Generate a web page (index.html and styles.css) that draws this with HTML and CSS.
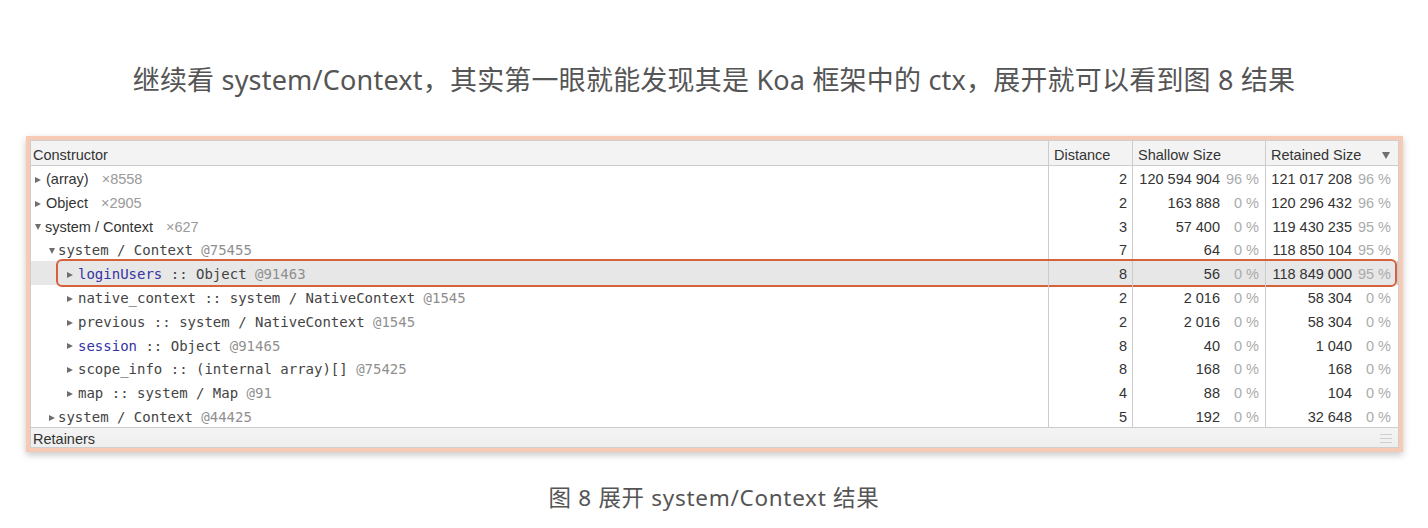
FILE: index.html
```html
<!DOCTYPE html>
<html lang="zh-CN">
<head>
<meta charset="utf-8">
<title>system/Context</title>
<link rel="stylesheet" href="styles.css">
</head>
<body>
<div class="page">
  <p class="title">继续看 system/Context，其实第一眼就能发现其是 Koa 框架中的 ctx，展开就可以看到图 8 结果</p>

  <div class="frame">
    <div class="inner">
      <div class="grid head">
        <div class="c name">Constructor</div>
        <div class="c dist-h">Distance</div>
        <div class="c size-h">Shallow Size</div>
        <div class="c size-h sorted">Retained Size<span class="sort"></span></div>
      </div>

      <div class="rows">
        <div class="grid row l0">
          <div class="c name"><span class="tri closed"></span><span>(array)</span><span class="count">×8558</span></div>
          <div class="c dist">2</div>
          <div class="c size"><span class="num">120 594 904</span><span class="pct">96 %</span></div>
          <div class="c size"><span class="num">121 017 208</span><span class="pct">96 %</span></div>
        </div>
        <div class="grid row l0">
          <div class="c name"><span class="tri closed"></span><span>Object</span><span class="count">×2905</span></div>
          <div class="c dist">2</div>
          <div class="c size"><span class="num">163 888</span><span class="pct">0 %</span></div>
          <div class="c size"><span class="num">120 296 432</span><span class="pct">96 %</span></div>
        </div>
        <div class="grid row l0">
          <div class="c name"><span class="tri open"></span><span>system / Context</span><span class="count">×627</span></div>
          <div class="c dist">3</div>
          <div class="c size"><span class="num">57 400</span><span class="pct">0 %</span></div>
          <div class="c size"><span class="num">119 430 235</span><span class="pct">95 %</span></div>
        </div>
        <div class="grid row l1 mono">
          <div class="c name"><span class="tri open"></span><span>system / Context <span class="id">@75455</span></span></div>
          <div class="c dist">7</div>
          <div class="c size"><span class="num">64</span><span class="pct">0 %</span></div>
          <div class="c size"><span class="num">118 850 104</span><span class="pct">95 %</span></div>
        </div>
        <div class="grid row l2 mono selected">
          <div class="c name"><span class="tri closed"></span><span><span class="prop">loginUsers</span> :: Object <span class="id">@91463</span></span></div>
          <div class="c dist">8</div>
          <div class="c size"><span class="num">56</span><span class="pct">0 %</span></div>
          <div class="c size"><span class="num">118 849 000</span><span class="pct">95 %</span></div>
          <div class="mark"></div>
        </div>
        <div class="grid row l2 mono">
          <div class="c name"><span class="tri closed"></span><span>native_context :: system / NativeContext <span class="id">@1545</span></span></div>
          <div class="c dist">2</div>
          <div class="c size"><span class="num">2 016</span><span class="pct">0 %</span></div>
          <div class="c size"><span class="num">58 304</span><span class="pct">0 %</span></div>
        </div>
        <div class="grid row l2 mono">
          <div class="c name"><span class="tri closed"></span><span>previous :: system / NativeContext <span class="id">@1545</span></span></div>
          <div class="c dist">2</div>
          <div class="c size"><span class="num">2 016</span><span class="pct">0 %</span></div>
          <div class="c size"><span class="num">58 304</span><span class="pct">0 %</span></div>
        </div>
        <div class="grid row l2 mono">
          <div class="c name"><span class="tri closed"></span><span><span class="prop">session</span> :: Object <span class="id">@91465</span></span></div>
          <div class="c dist">8</div>
          <div class="c size"><span class="num">40</span><span class="pct">0 %</span></div>
          <div class="c size"><span class="num">1 040</span><span class="pct">0 %</span></div>
        </div>
        <div class="grid row l2 mono">
          <div class="c name"><span class="tri closed"></span><span>scope_info :: (internal array)[] <span class="id">@75425</span></span></div>
          <div class="c dist">8</div>
          <div class="c size"><span class="num">168</span><span class="pct">0 %</span></div>
          <div class="c size"><span class="num">168</span><span class="pct">0 %</span></div>
        </div>
        <div class="grid row l2 mono">
          <div class="c name"><span class="tri closed"></span><span>map :: system / Map <span class="id">@91</span></span></div>
          <div class="c dist">4</div>
          <div class="c size"><span class="num">88</span><span class="pct">0 %</span></div>
          <div class="c size"><span class="num">104</span><span class="pct">0 %</span></div>
        </div>
        <div class="grid row l1 mono">
          <div class="c name"><span class="tri closed"></span><span>system / Context <span class="id">@44425</span></span></div>
          <div class="c dist">5</div>
          <div class="c size"><span class="num">192</span><span class="pct">0 %</span></div>
          <div class="c size"><span class="num">32 648</span><span class="pct">0 %</span></div>
        </div>
      </div>

      <div class="retainers">
        <span>Retainers</span>
        <svg class="grip" width="12" height="9" viewBox="0 0 12 9"><path d="M0 0.5H12M0 4.5H12M0 8.5H12" stroke="#cfcfcf" stroke-width="1"/></svg>
      </div>
    </div>
  </div>

  <p class="caption">图 8 展开 system/Context 结果</p>
</div>
</body>
</html>
```

FILE: styles.css
```css
* { box-sizing: border-box; }

html, body {
  margin: 0;
  padding: 0;
  background: #ffffff;
}

.page {
  width: 1428px;
  height: 528px;
  padding-top: 62px;
  overflow: hidden;
}

.title {
  margin: 0;
  height: 36px;
  line-height: 36px;
  text-align: center;
  font-family: "Noto Sans", "Noto Sans CJK SC", sans-serif;
  font-size: 27px;
  letter-spacing: 0.2px;
  color: #555555;
}

.caption {
  margin: 31px 0 0;
  height: 30px;
  line-height: 30px;
  text-align: center;
  font-family: "Noto Sans", "Noto Sans CJK SC", sans-serif;
  font-size: 22.5px;
  letter-spacing: 0.7px;
  color: #555555;
}

.frame {
  margin: 38px 25px 0 26px;
  border: 4px solid #f6cab5;
  box-shadow: 0 3px 7px rgba(0, 0, 0, 0.22);
  background: #ffffff;
}

.inner {
  border: 1px solid #cfcfcf;
  font-family: "Liberation Sans", Arial, sans-serif;
  font-size: 14.5px;
  color: #333333;
}

.grid {
  display: grid;
  grid-template-columns: 1018px 84px 133px 1fr;
}

.c {
  border-right: 1px solid #cccccc;
  white-space: nowrap;
  overflow: hidden;
}
.c:last-of-type { border-right: none; }

.head {
  height: 25px;
  background: #f3f3f4;
  border-bottom: 1px solid #cccccc;
}
.head .c {
  padding-top: 4px;
  line-height: 20px;
}
.head .name { padding-left: 2px; }
.dist-h { padding-left: 5px; }
.size-h { padding-left: 5px; }
.sorted {
  display: flex;
  align-items: center;
  justify-content: space-between;
  padding-right: 8px;
}
.sort {
  width: 0;
  height: 0;
  border-left: 4px solid transparent;
  border-right: 4px solid transparent;
  border-top: 7px solid #6f6f6f;
}

.rows {
  height: 261px;
  overflow: hidden;
}

.row {
  position: relative;
  height: 23.8px;
}
.row .c {
  padding-top: 4px;
  line-height: 19.8px;
}

.row .name {
  display: flex;
  align-items: center;
}

.l0 .name { padding-left: 4px; }
.l1 .name { padding-left: 18px; }
.l2 .name { padding-left: 36px; }

.tri {
  display: inline-block;
  width: 0;
  height: 0;
  flex: none;
}
.tri.closed {
  border-top: 3.5px solid transparent;
  border-bottom: 3.5px solid transparent;
  border-left: 6px solid #6e6e6e;
  margin-right: 5px;
}
.tri.open {
  border-left: 3.5px solid transparent;
  border-right: 3.5px solid transparent;
  border-top: 6px solid #6e6e6e;
  margin-right: 4px;
}
.l1 .tri { margin-right: 3px; }

.count {
  margin-left: 13px;
  color: #9a9a9a;
}

.mono .name {
  font-family: "DejaVu Sans Mono", "Liberation Mono", monospace;
  font-size: 14px;
  color: #444444;
}
.id { color: #8f8f8f; }
.prop { color: #3434a2; }

.dist {
  text-align: right;
  padding-right: 5px;
}

.size {
  display: flex;
  justify-content: flex-end;
  padding-right: 6px;
}
.size:last-of-type { padding-right: 7px; }
.pct {
  width: 39px;
  text-align: right;
  color: #ababab;
}

.selected { background: #e7e7e7; }

.mark {
  position: absolute;
  left: 25px;
  right: 1px;
  top: -2px;
  bottom: -2px;
  border: 2px solid #d4623d;
  border-radius: 6px;
  pointer-events: none;
}

.retainers {
  height: 20px;
  border-top: 1px solid #cccccc;
  background: linear-gradient(#f4f4f4, #eeeeee);
  padding: 2px 6px 0 2px;
  line-height: 18px;
  display: flex;
  justify-content: space-between;
  align-items: center;
}
.grip { flex: none; }
```
